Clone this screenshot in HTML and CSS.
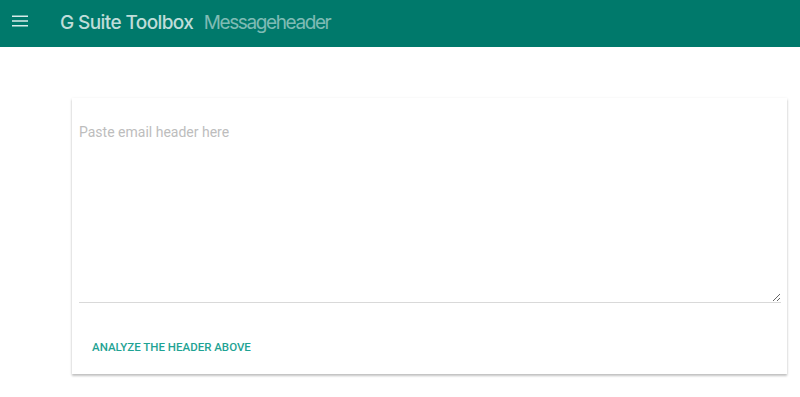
FILE: index.html
```html
<!DOCTYPE html>
<html lang="en">
<head>
<meta charset="UTF-8" />
<title>G Suite Toolbox Messageheader</title>
<link rel="stylesheet" href="styles.css">
</head>
<body>

<!-- Top bar -->
<header class="topbar">
  <button class="menu-btn" aria-label="Menu">
    <svg width="16" height="12" viewBox="0 0 16 12"><path d="M0 0.5h16v1.6H0zM0 5.2h16v1.6H0zM0 9.9h16v1.6H0z" fill="#d7ece9"/></svg>
  </button>
  <h1 class="title">G Suite Toolbox <span class="subtitle">Messageheader</span></h1>
</header>

<!-- Header input card -->
<main class="content">
  <div class="card">
    <textarea class="header-input" placeholder="Paste email header here"></textarea>
    <div class="actions">
      <button class="analyze-btn">Analyze the header above</button>
    </div>
  </div>
</main>

</body>
</html>
```

FILE: styles.css
```css
html, body {
  height: 100%;
}

body {
  margin: 0;
  font-family: Roboto, Arial, sans-serif;
  background: #fff;
  overflow: hidden;
}

.topbar {
  height: 47px;
  background: #00796b;
  display: flex;
  align-items: center;
}

.menu-btn {
  background: none;
  border: none;
  padding: 0;
  margin: 0 0 5px 12px;
  width: 16px;
  height: 12px;
  display: flex;
}

.title {
  margin: 0 0 2px 32px;
  font-family: Inter, "Open Sans", sans-serif;
  font-weight: 500;
  font-size: 19px;
  letter-spacing: -0.6px;
  color: rgba(255,255,255,0.75);
}

.subtitle {
  margin-left: 6px;
  font-weight: 400;
  letter-spacing: -1.4px;
  color: rgba(255,255,255,0.5);
}

.content {
  padding: 51px 13px 0 72px;
}

.card {
  background: #fff;
  padding: 24px 6px 9px 7px;
  box-shadow: 0 1px 3px rgba(0,0,0,0.12), 0 2px 2px rgba(0,0,0,0.18);
}

.header-input {
  display: block;
  width: 100%;
  box-sizing: border-box;
  height: 181px;
  margin: 0;
  border: none;
  border-bottom: 1px solid #d9d9d9;
  padding: 0;
  font-family: Roboto, Arial, sans-serif;
  font-size: 14px;
  line-height: 20px;
  outline: none;
}

.header-input::placeholder {
  color: #bdbdbd;
}

.actions {
  display: flex;
  margin-top: 26px;
}

.analyze-btn {
  height: 36px;
  margin: 0;
  padding: 0 13px;
  background: none;
  border: none;
  font-family: Roboto, Arial, sans-serif;
  font-weight: 500;
  font-size: 11.5px;
  text-transform: uppercase;
  color: #1fa394;
  cursor: pointer;
}
```
